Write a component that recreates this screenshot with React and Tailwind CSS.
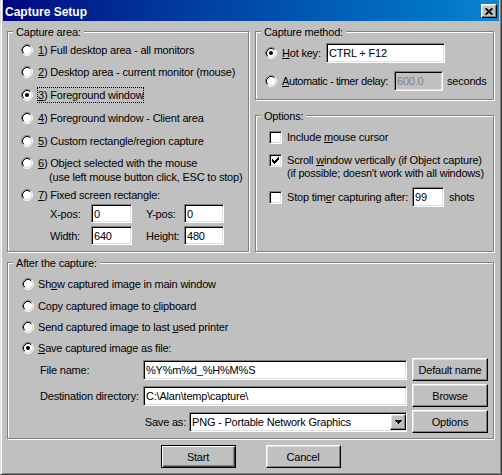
import React from 'react';

// classic win9x bevels
const sunken =
  'border border-t-[#808080] border-l-[#808080] border-r-white border-b-white shadow-[inset_1px_1px_0_#000,inset_-1px_-1px_0_#dfdfdf]';
const raised =
  'border border-t-white border-l-white border-r-black border-b-black shadow-[inset_-1px_-1px_0_#808080,inset_1px_1px_0_#dfdfdf]';

const Radio = ({ checked }) => (
  <svg width="12" height="12" viewBox="0 0 12 12" className="shrink-0">
    <circle cx="6" cy="6" r="4.5" fill="#fff" />
    <path d="M2.11 9.89A5.5 5.5 0 0 1 9.89 2.11" stroke="#808080" fill="none" />
    <path d="M9.89 2.11A5.5 5.5 0 0 1 2.11 9.89" stroke="#fff" fill="none" />
    <path d="M2.82 9.18A4.5 4.5 0 0 1 9.18 2.82" stroke="#000" fill="none" />
    <path d="M9.18 2.82A4.5 4.5 0 0 1 2.82 9.18" stroke="#dfdfdf" fill="none" />
    {checked && <circle cx="6" cy="6" r="2" fill="#000" />}
  </svg>
);

const Check = ({ checked }) => (
  <span className={`w-[13px] h-[13px] shrink-0 bg-white flex items-center justify-center ${sunken}`}>
    {checked && (
      <svg width="7" height="7" viewBox="0 0 7 7" shapeRendering="crispEdges">
        <path d="M0 2H1V3H2V4H3V3H4V2H5V1H6V0H7V3H6V4H5V5H4V6H3V7H2V6H1V5H0Z" fill="#000" />
      </svg>
    )}
  </span>
);

const Group = ({ title, className = '', children }) => (
  <div className={`relative border border-[#808080] shadow-[inset_1px_1px_0_#fff,1px_1px_0_#fff] ${className}`}>
    <span className="absolute -top-[6px] left-[5px] px-[3px] bg-[#c0c0c0] leading-[13px]">{title}</span>
    {children}
  </div>
);

const RadioRow = ({ checked, focus, className = '', children }) => (
  <div className={`flex items-center gap-[4px] ${className}`}>
    <Radio checked={checked} />
    <span className={`border ${focus ? 'border-dotted border-black' : 'border-transparent'}`}>{children}</span>
  </div>
);

const Field = ({ className = '', children }) => (
  <div className={`bg-white flex items-center px-[2px] whitespace-nowrap overflow-hidden ${sunken} ${className}`}>
    {children}
  </div>
);

const Button = ({ className = '', children }) => (
  <button className={`bg-[#c0c0c0] flex items-center justify-center ${raised} ${className}`}>{children}</button>
);

export default function App() {
  return (
    <div className="w-[502px] h-[475px] bg-[#c0c0c0] font-['Liberation_Sans',Arial,sans-serif] text-[11px] leading-[14px] tracking-[-0.2px] text-black border-l border-r border-b border-l-[#dfdfdf] border-r-[#404040] border-b-[#404040] shadow-[inset_1px_0_0_#fff,inset_-1px_-1px_0_#808080] px-[2px] pb-[2px] flex flex-col select-none">
      <div className="h-[21px] shrink-0 flex items-center justify-between px-[2px] bg-linear-to-r from-[#000080] to-[#1084d0]">
        <span className="text-white font-bold text-[12px] tracking-normal pt-[2px]">Capture Setup</span>
        <button className={`w-[16px] h-[14px] mt-[1px] bg-[#c0c0c0] flex items-center justify-center ${raised}`}>
          <svg width="8" height="7" viewBox="0 0 8 7">
            <path d="M0.6 0.3L7.4 6.7M7.4 0.3L0.6 6.7" stroke="#000" strokeWidth="1.7" />
          </svg>
        </button>
      </div>

      <div className="flex-1 flex flex-col pt-[10px] pl-[4px] pr-[5px]">
        <div className="flex gap-[6px] h-[221px]">
          <Group title="Capture area:" className="w-[242px] h-full pt-[7px] pl-[13px]">
            <RadioRow className="h-[22px]"><u>1</u>) Full desktop area - all monitors</RadioRow>
            <RadioRow className="h-[22px]"><u>2</u>) Desktop area - current monitor (mouse)</RadioRow>
            <RadioRow className="h-[23px]" checked focus><u>3</u>) Foreground window</RadioRow>
            <RadioRow className="h-[23px]"><u>4</u>) Foreground window - Client area</RadioRow>
            <RadioRow className="h-[23px]"><u>5</u>) Custom rectangle/region capture</RadioRow>
            <div className="h-[34px] pt-[3px] flex items-start gap-[4px]">
              <div className="h-[16px] flex items-center">
                <Radio />
              </div>
              <span className="border border-transparent">
                <span className="block"><u>6</u>) Object selected with the mouse</span>
                <span className="block pl-[11px]">(use left mouse button click, ESC to stop)</span>
              </span>
            </div>
            <RadioRow className="h-[18px]"><u>7</u>) Fixed screen rectangle:</RadioRow>
            <div className="h-[19px] ml-[29px] flex items-center">
              <span className="w-[41px]">X-pos:</span>
              <Field className="w-[41px] h-[19px]">0</Field>
              <span className="w-[38px] ml-[14px]">Y-pos:</span>
              <Field className="w-[40px] h-[19px]">0</Field>
            </div>
            <div className="h-[19px] mt-[3px] ml-[29px] flex items-center">
              <span className="w-[41px]">Width:</span>
              <Field className="w-[41px] h-[19px]">640</Field>
              <span className="w-[38px] ml-[14px]">Height:</span>
              <Field className="w-[40px] h-[19px]">480</Field>
            </div>
          </Group>

          <div className="flex-1 flex flex-col">
            <Group title="Capture method:" className="h-[69px] pt-[11px] pl-[9px]">
              <div className="h-[20px] flex items-center">
                <Radio checked />
                <span className="w-[45px] ml-[4px] border border-transparent"><u>H</u>ot key:</span>
                <Field className="w-[119px] h-[20px]">CTRL + F12</Field>
              </div>
              <div className="h-[20px] mt-[8px] flex items-center">
                <Radio />
                <span className="w-[113px] ml-[4px] border border-transparent whitespace-nowrap tracking-[-0.4px]"><u>A</u>utomatic - timer delay:</span>
                <div className={`w-[49px] h-[20px] bg-[#c0c0c0] text-[#808080] flex items-center px-[2px] ${sunken}`}>600.0</div>
                <span className="ml-[4px]">seconds</span>
              </div>
            </Group>

            <Group title="Options:" className="h-[137px] mt-[15px] pt-[14px] pl-[13px]">
              <div className="h-[14px] flex items-center gap-[5px]">
                <Check />
                <span>Include <u>m</u>ouse cursor</span>
              </div>
              <div className="mt-[10px] flex items-start gap-[5px] leading-[13px]">
                <div className="h-[13px] flex items-center">
                  <Check checked />
                </div>
                <span>
                  <span className="block">Scroll <u>w</u>indow vertically (if Object capture)</span>
                  <span className="block">(if possible; doesn't work with all windows)</span>
                </span>
              </div>
              <div className="h-[20px] mt-[7px] flex items-center">
                <Check />
                <span className="w-[125px] ml-[5px] whitespace-nowrap">Stop tim<u>e</u>r capturing after:</span>
                <Field className="w-[32px] h-[20px]">99</Field>
                <span className="ml-[5px]">shots</span>
              </div>
            </Group>
          </div>
        </div>

        <Group title="After the capture:" className="mt-[10px] h-[177px] pt-[10px] pl-[14px]">
          <div className="h-[22px] flex items-center gap-[4px]">
            <Radio />
            <span>Sh<u>o</u>w captured image in main window</span>
          </div>
          <div className="h-[21px] flex items-center gap-[4px]">
            <Radio />
            <span>Copy captured image to <u>c</u>lipboard</span>
          </div>
          <div className="h-[22px] flex items-center gap-[4px]">
            <Radio />
            <span>Send captured image to last <u>u</u>sed printer</span>
          </div>
          <div className="h-[20px] flex items-center gap-[4px]">
            <Radio checked />
            <span><u>S</u>ave captured image as file:</span>
          </div>

          <div className="ml-[18px] flex flex-col gap-[3px]">
            <div className="h-[23px] flex items-center">
              <span className="w-[103px]">File name:</span>
              <Field className="w-[264px] h-[20px]">%Y%m%d_%H%M%S</Field>
              <Button className="w-[76px] h-[23px] ml-[5px]">Default name</Button>
            </div>
            <div className="h-[23px] flex items-center">
              <span className="w-[103px]">Destination directory:</span>
              <Field className="w-[264px] h-[20px]">C:\Alan\temp\capture\</Field>
              <Button className="w-[76px] h-[23px] ml-[5px]">Browse</Button>
            </div>
            <div className="h-[23px] flex items-center">
              <div className="w-[367px] flex items-center justify-end gap-[3px]">
                <span>Save as:</span>
                <div className={`w-[218px] h-[20px] bg-white flex items-center justify-between pl-[2px] ${sunken}`}>
                  <span className="whitespace-nowrap">PNG - Portable Network Graphics</span>
                  <span className={`w-[16px] h-[16px] bg-[#c0c0c0] flex items-center justify-center ${raised}`}>
                    <svg width="7" height="4" viewBox="0 0 7 4" shapeRendering="crispEdges">
                      <path d="M0 0H7V1H6V2H5V3H4V4H3V3H2V2H1V1H0Z" fill="#000" />
                    </svg>
                  </span>
                </div>
              </div>
              <Button className="w-[76px] h-[23px] ml-[5px]">Options</Button>
            </div>
          </div>
        </Group>

        <div className="mt-[6px] flex justify-center gap-[30px]">
          <button className="w-[75px] h-[23px] bg-[#c0c0c0] border border-black shadow-[inset_1px_1px_0_#fff,inset_-1px_-1px_0_#404040,inset_-2px_-2px_0_#808080] flex items-center justify-center">
            Start
          </button>
          <Button className="w-[75px] h-[23px]">Cancel</Button>
        </div>
      </div>
    </div>
  );
}
